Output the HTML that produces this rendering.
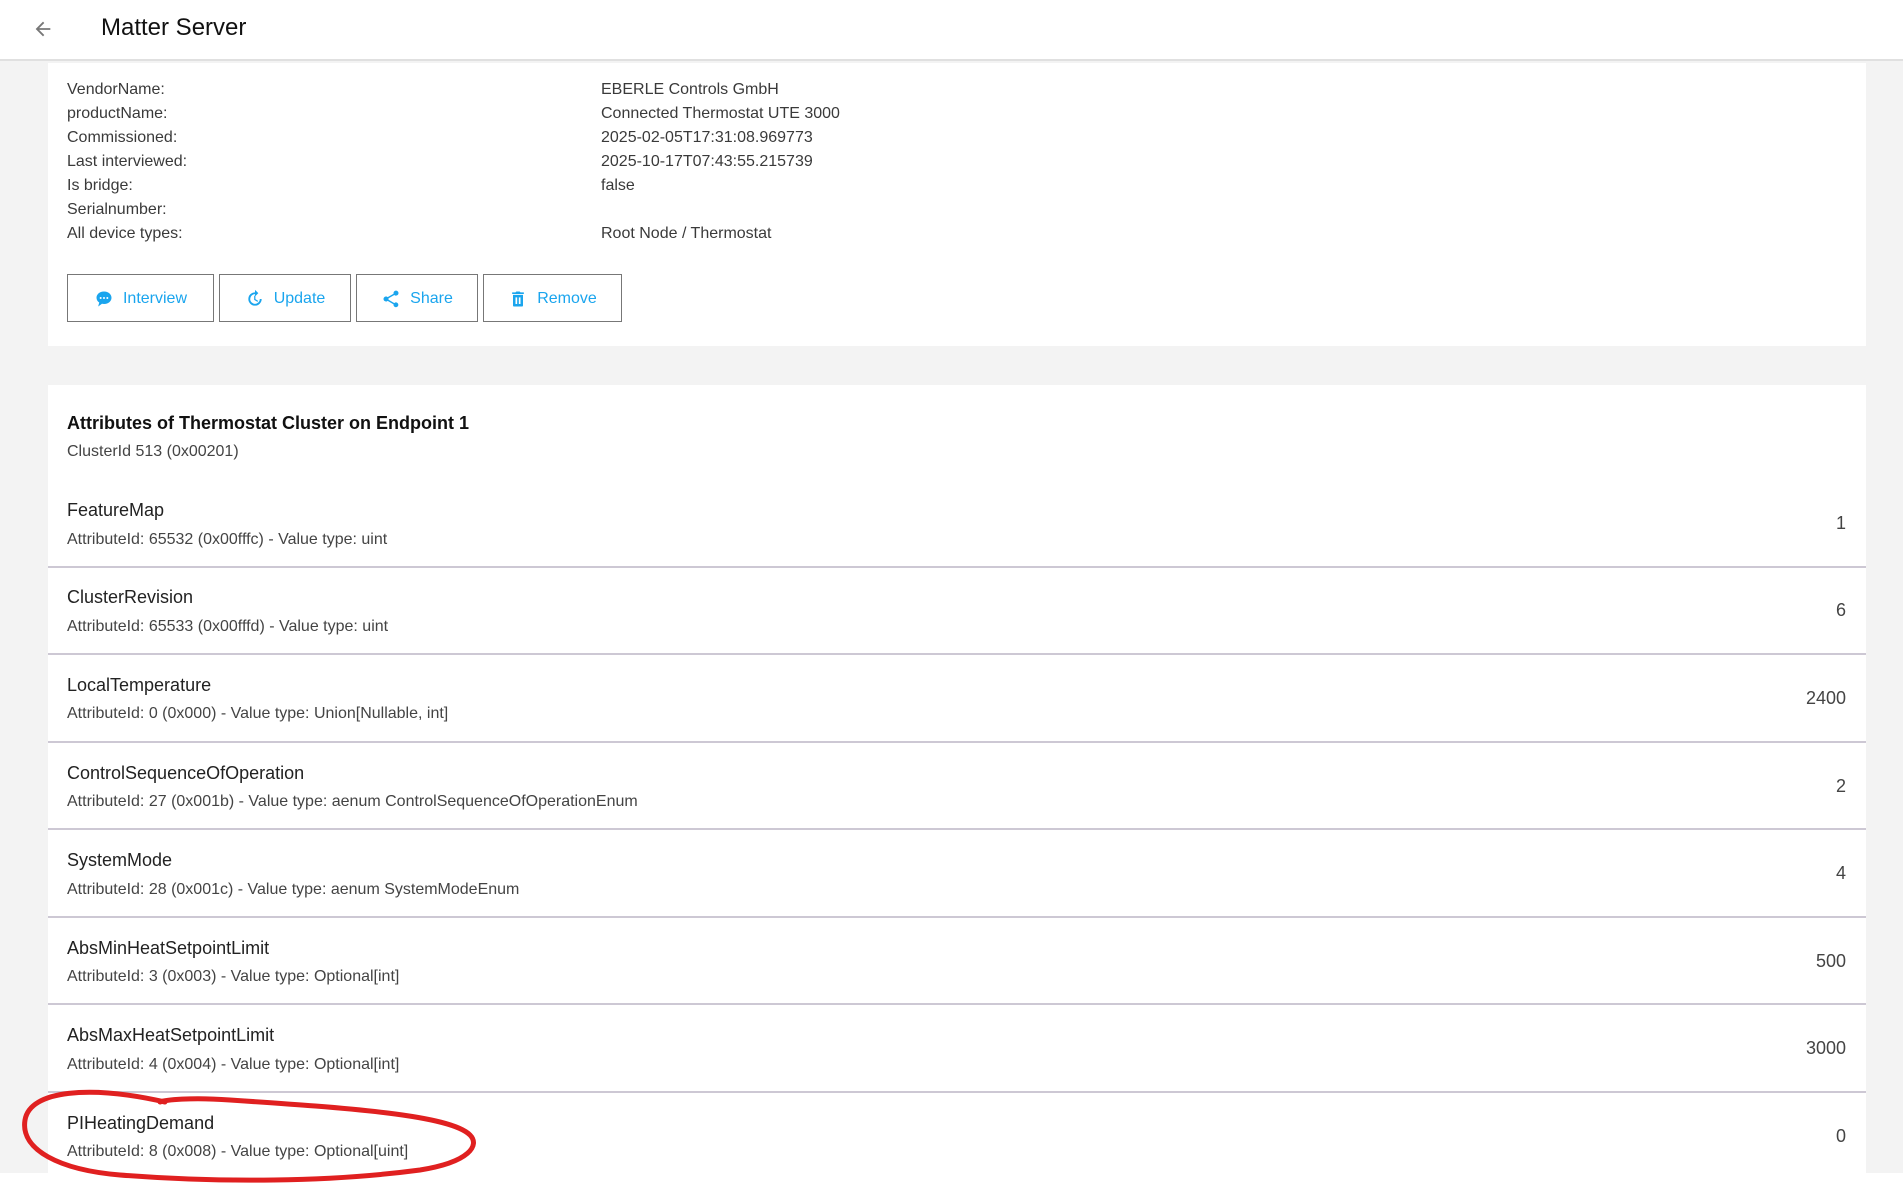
<!DOCTYPE html>
<html><head><meta charset="utf-8"><style>
*{margin:0;padding:0;box-sizing:border-box}
body{width:1903px;height:1187px;background:#f3f3f3;font-family:"Liberation Sans",sans-serif;color:#333;position:relative;overflow:hidden}
.hdr{position:absolute;left:0;top:0;width:1903px;height:61px;background:#fff;border-bottom:2px solid #e0e0e0}
.hdr .t{position:absolute;left:101px;top:14px;font-size:24px;color:#111}
.card{position:absolute;left:48px;width:1818px;background:#fff}
.a{position:absolute;font-size:16px;color:#3a3a3a;line-height:20px;margin-top:1px}
.btn{position:absolute;top:274px;height:48px;border:1.5px solid #777;color:#1aa5ee;font-size:16px;display:flex;align-items:center;justify-content:center;gap:9px;padding-top:1px}
.btn svg{width:20px;height:20px;fill:#1aa5ee}
.nm{position:absolute;left:67px;font-size:18px;color:#222;margin-top:1px}
.sb{position:absolute;left:67px;font-size:16px;color:#444;margin-top:2px}
.vl{position:absolute;right:57px;font-size:18px;color:#444;margin-top:1px}
.dv{position:absolute;left:48px;width:1818px;height:2px;background:#cdc8d4}
</style></head><body>
<div class="hdr">
<svg style="position:absolute;left:32px;top:18px" width="22" height="22" viewBox="0 0 24 24"><path d="M20 11H7.8l5.6-5.6L12 4l-8 8 8 8 1.4-1.4L7.8 13H20z" fill="#777"/></svg>
<div class="t">Matter Server</div>
</div>
<div class="card" style="top:63px;height:283px"></div>
<div class="a" style="left:67px;top:79px">VendorName:</div><div class="a" style="left:601px;top:79px">EBERLE Controls GmbH</div>
<div class="a" style="left:67px;top:103px">productName:</div><div class="a" style="left:601px;top:103px">Connected Thermostat UTE 3000</div>
<div class="a" style="left:67px;top:127px">Commissioned:</div><div class="a" style="left:601px;top:127px">2025-02-05T17:31:08.969773</div>
<div class="a" style="left:67px;top:151px">Last interviewed:</div><div class="a" style="left:601px;top:151px">2025-10-17T07:43:55.215739</div>
<div class="a" style="left:67px;top:175px">Is bridge:</div><div class="a" style="left:601px;top:175px">false</div>
<div class="a" style="left:67px;top:199px">Serialnumber:</div>
<div class="a" style="left:67px;top:223px">All device types:</div><div class="a" style="left:601px;top:223px">Root Node / Thermostat</div>
<div class="btn" style="left:67px;width:147px"><svg viewBox="0 0 24 24"><path d="M12 3C6.5 3 3 6.6 3 10.5c0 2.4 1.3 4.4 3.3 5.7L5 21l4.6-3.3c.8.2 1.6.3 2.4.3 5.5 0 9-3.6 9-7.5S17.5 3 12 3zM8 12a1.2 1.2 0 110-2.4A1.2 1.2 0 018 12zm4 0a1.2 1.2 0 110-2.4 1.2 1.2 0 010 2.4zm4 0a1.2 1.2 0 110-2.4 1.2 1.2 0 010 2.4z"/></svg>Interview</div>
<div class="btn" style="left:219px;width:132px"><svg viewBox="0 0 24 24"><path d="M12 4a8 8 0 108 8h-2.2A5.8 5.8 0 1112 6.2V9l4-4-4-4v3zM11 8v5l4 2.5.8-1.3-3.3-2V8z"/></svg>Update</div>
<div class="btn" style="left:356px;width:122px"><svg viewBox="0 0 24 24"><path d="M18 16.1c-.8 0-1.4.3-2 .8l-7.1-4.2c.1-.2.1-.5.1-.7s0-.5-.1-.7L16 7.2c.5.5 1.2.8 2 .8a3 3 0 10-3-3c0 .2 0 .5.1.7L8 9.8C7.5 9.3 6.8 9 6 9a3 3 0 100 6c.8 0 1.5-.3 2-.8l7.1 4.2c-.1.2-.1.4-.1.6a2.9 2.9 0 102.9-2.9z"/></svg>Share</div>
<div class="btn" style="left:483px;width:139px"><svg viewBox="0 0 24 24"><path d="M5 4h4l1-1h4l1 1h4v2H5zM6 7h12v13a1 1 0 01-1 1H7a1 1 0 01-1-1zm3 3v8h2v-8zm4 0v8h2v-8z"/></svg>Remove</div>

<div class="card" style="top:385px;height:788px"></div>
<div style="position:absolute;left:67px;top:413px;font-size:18px;font-weight:bold;color:#111">Attributes of Thermostat Cluster on Endpoint 1</div>
<div class="sb" style="top:441px">ClusterId 513 (0x00201)</div>

<div class="nm" style="top:499px">FeatureMap</div><div class="sb" style="top:529px">AttributeId: 65532 (0x00fffc) - Value type: uint</div><div class="vl" style="top:512px">1</div><div class="dv" style="top:566px"></div>
<div class="nm" style="top:586px">ClusterRevision</div><div class="sb" style="top:616px">AttributeId: 65533 (0x00fffd) - Value type: uint</div><div class="vl" style="top:599px">6</div><div class="dv" style="top:653px"></div>
<div class="nm" style="top:674px">LocalTemperature</div><div class="sb" style="top:703px">AttributeId: 0 (0x000) - Value type: Union[Nullable, int]</div><div class="vl" style="top:687px">2400</div><div class="dv" style="top:741px"></div>
<div class="nm" style="top:762px">ControlSequenceOfOperation</div><div class="sb" style="top:791px">AttributeId: 27 (0x001b) - Value type: aenum ControlSequenceOfOperationEnum</div><div class="vl" style="top:775px">2</div><div class="dv" style="top:828px"></div>
<div class="nm" style="top:849px">SystemMode</div><div class="sb" style="top:879px">AttributeId: 28 (0x001c) - Value type: aenum SystemModeEnum</div><div class="vl" style="top:862px">4</div><div class="dv" style="top:916px"></div>
<div class="nm" style="top:937px">AbsMinHeatSetpointLimit</div><div class="sb" style="top:966px">AttributeId: 3 (0x003) - Value type: Optional[int]</div><div class="vl" style="top:950px">500</div><div class="dv" style="top:1003px"></div>
<div class="nm" style="top:1024px">AbsMaxHeatSetpointLimit</div><div class="sb" style="top:1054px">AttributeId: 4 (0x004) - Value type: Optional[int]</div><div class="vl" style="top:1037px">3000</div><div class="dv" style="top:1091px"></div>
<div class="nm" style="top:1112px">PIHeatingDemand</div><div class="sb" style="top:1141px">AttributeId: 8 (0x008) - Value type: Optional[uint]</div><div class="vl" style="top:1125px">0</div>
<div style="position:absolute;left:0;top:1173px;width:1903px;height:14px;background:#fff"></div>
<svg style="position:absolute;left:0;top:0" width="1903" height="1187"><path d="M165 1102 C90 1085,30 1090,25 1120 C20 1150,60 1170,120 1175 C220 1183,330 1182,420 1170 C470 1162,480 1145,470 1135 C450 1115,350 1108,230 1100 C190 1097,165 1100,160 1102" fill="none" stroke="#e02020" stroke-width="5" stroke-linecap="round"/></svg>
</body></html>
